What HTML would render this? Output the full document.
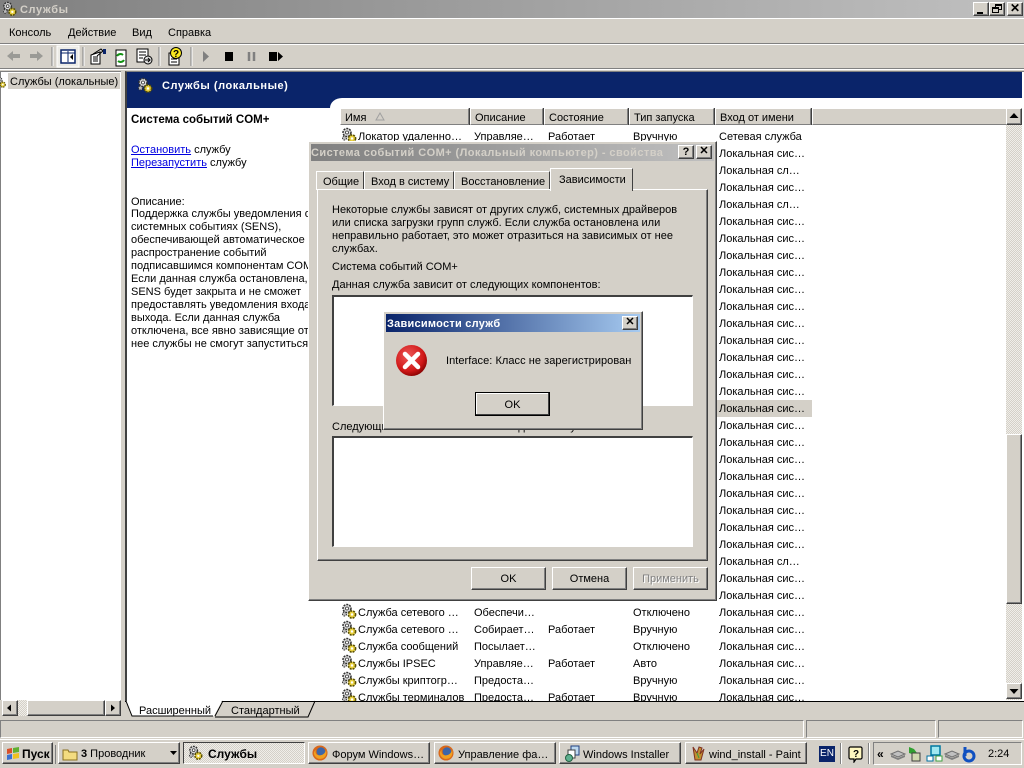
<!DOCTYPE html>
<html><head><meta charset="utf-8">
<style>
html,body{margin:0;padding:0;background:#d4d0c8}
#p{position:relative;width:1024px;height:768px;overflow:hidden;background:#d4d0c8;font:11px/13px "Liberation Sans","DejaVu Sans",sans-serif;color:#000}
#p div,#p span.a,#p svg.a{position:absolute}
.t{white-space:nowrap;transform-origin:0 50%;margin-top:1px}
.b{background:#d4d0c8;border-top:1px solid #fff;border-left:1px solid #fff;border-right:1px solid #404040;border-bottom:1px solid #404040;box-sizing:border-box;box-shadow:inset -1px -1px 0 #808080;text-align:center}
.h{background:#d4d0c8;border-top:1px solid #fff;border-left:1px solid #fff;border-right:1px solid #808080;border-bottom:1px solid #808080;box-sizing:border-box;height:17px;top:108px;padding:3px 0 0 4px;white-space:nowrap;box-shadow:1px 0 0 #404040}
.s,.d,.c,.k,.v{position:absolute;white-space:nowrap;margin-top:1px}
.s{left:18px}
.d{left:134px}
.c{left:208px}
.k{left:293px}
.v{left:379px}
.g{position:absolute;left:1px;width:17px;height:17px}
.chk{background-color:#f0eee9;background-image:linear-gradient(45deg,#d4d0c8 25%,transparent 25%,transparent 75%,#d4d0c8 75%),linear-gradient(45deg,#d4d0c8 25%,transparent 25%,transparent 75%,#d4d0c8 75%);background-size:2px 2px;background-position:0 0,1px 1px}
.sunk{border-top:1px solid #808080;border-left:1px solid #808080;border-right:1px solid #fff;border-bottom:1px solid #fff;box-sizing:border-box}
.list{background:#fff;border-top:2px solid #404040;border-left:2px solid #404040;border-right:1px solid #fff;border-bottom:1px solid #fff;box-sizing:border-box;box-shadow:1px 1px 0 #d4d0c8}
.tb{background:#d4d0c8;border-top:1px solid #fff;border-left:1px solid #fff;border-right:1px solid #404040;border-bottom:1px solid #404040;box-sizing:border-box;box-shadow:inset -1px -1px 0 #808080;height:22px;top:742px;padding:6px 0 0 24px;white-space:nowrap}
a{color:#0000e0;text-decoration:underline}
</style></head><body><div id="p">
<svg width="0" height="0" style="position:absolute"><defs>
<symbol id="gear" viewBox="0 0 17 17">
<circle cx="6" cy="5.5" r="4" fill="#d8d8d8" stroke="#303030" stroke-width="1.5" stroke-dasharray="2 1"/>
<circle cx="6" cy="5.5" r="1.5" fill="#fff" stroke="#333" stroke-width=".8"/>
<circle cx="11" cy="11.5" r="3.6" fill="#e8d040" stroke="#5a5000" stroke-width="1.6" stroke-dasharray="2 1"/>
<circle cx="11" cy="11.5" r="1.2" fill="#fff"/>
<circle cx="3.5" cy="11" r="2" fill="#bbb" stroke="#333" stroke-width="1" stroke-dasharray="1.5 1"/>
</symbol>
<symbol id="fx" viewBox="0 0 17 17">
<circle cx="8.5" cy="8.5" r="8" fill="#d9681a"/>
<circle cx="9.5" cy="7" r="4.6" fill="#3d66a8"/>
<path d="M2 9C3 14 8 16 12 14 15 12 16 9 15 5 14 9 11 11 8 11 5 11 3 9 4 5 2.500 6 2 8 2 9Z" fill="#f0a020"/>
</symbol>
</defs></svg>

<!-- title bar -->
<div style="left:0;top:0;width:1024px;height:18px;background:linear-gradient(90deg,#808080,#c0c0c0)"></div>
<svg class="a" style="left:2px;top:1px" width="16" height="16"><use href="#gear"/></svg>
<div class="t" style="left:20px;top:3px;font-weight:bold;color:#d4d0c8;letter-spacing:.6px">Службы</div>
<div class="b" style="left:973px;top:2px;width:16px;height:14px"><div style="left:3px;top:9px;width:6px;height:2px;background:#000"></div></div>
<div class="b" style="left:989px;top:2px;width:16px;height:14px"><div style="left:5px;top:1px;width:7px;height:6px;border:1px solid #000;border-top-width:2px;box-sizing:border-box"></div><div style="left:2px;top:4px;width:7px;height:6px;border:1px solid #000;border-top-width:2px;box-sizing:border-box;background:#d4d0c8"></div></div>
<div class="b" style="left:1007px;top:2px;width:16px;height:14px;font:bold 12px/11px 'Liberation Sans'">✕</div>

<div style="left:0;top:18px;width:1024px;height:1px;background:#fff"></div>
<div class="t" style="left:9px;top:26px">Консоль</div>
<div class="t" style="left:68px;top:26px">Действие</div>
<div class="t" style="left:132px;top:26px">Вид</div>
<div class="t" style="left:168px;top:26px">Справка</div>
<div style="left:0;top:43px;width:1024px;height:1px;background:#808080"></div>
<div style="left:0;top:44px;width:1024px;height:1px;background:#fff"></div>

<!-- toolbar -->
<svg class="a" style="left:0;top:45px" width="300" height="23">
<path d="M7 11l6-5v3h7v4h-7v3z" fill="#9a9a96"/><path d="M43 11l-6-5v3h-7v4h7v3z" fill="#9a9a96"/>
<path d="M52 2v19" stroke="#808080"/><path d="M53 2v19" stroke="#fff"/>
<rect x="57" y="1" width="22" height="21" fill="#ecebe6" stroke="#fff"/>
<rect x="61" y="5" width="14" height="13" fill="#fff" stroke="#0a246a" stroke-width="1.500"/><path d="M61 8h14M68 6v11" stroke="#0a246a"/><path d="M73 9l-3 3 3 3z" fill="#000"/>
<path d="M83 2v19" stroke="#808080"/><path d="M84 2v19" stroke="#fff"/>
<path d="M91 10l9-3v12H91z" fill="#fff" stroke="#000"/><path d="M93 12h5M93 14h5M93 16h5M93 9l8-5 2 2-6 5" stroke="#000" fill="none"/><rect x="103" y="4" width="3" height="5" fill="#0a246a"/>
<rect x="116" y="5" width="10" height="16" fill="#fff" stroke="#000"/><path d="M123 10a4 4 0 0 0-6 1M118 16a4 4 0 0 0 6-1" stroke="#109010" stroke-width="2" fill="none"/>
<rect x="137" y="4" width="11" height="13" fill="#fff" stroke="#000"/><path d="M139 7h7M139 10h7M139 13h4" stroke="#000"/><circle cx="148" cy="15" r="4" fill="#ddd" stroke="#000"/><path d="M145 15h5M148 13l2 2-2 2" stroke="#000" fill="none"/>
<path d="M159 2v19" stroke="#808080"/><path d="M160 2v19" stroke="#fff"/>
<rect x="169" y="8" width="10" height="12" fill="#fff" stroke="#000"/><path d="M171 11h6M171 14h6M171 17h6" stroke="#000"/>
<circle cx="176" cy="8" r="5.500" fill="#f8e820" stroke="#000"/><text x="173" y="12" font-family="Liberation Sans" font-size="10" font-weight="bold">?</text>
<path d="M191 2v19" stroke="#808080"/><path d="M192 2v19" stroke="#fff"/>
<path d="M203 6l6 5.500-6 5.500z" fill="#808080"/>
<rect x="225" y="7" width="8" height="9" fill="#000"/>
<path d="M249 7v9M254 7v9" stroke="#808080" stroke-width="2.500"/>
<rect x="269" y="7" width="8" height="9" fill="#000"/><path d="M278 7l5 4.500-5 4.500z" fill="#000"/>
</svg>
<div style="left:0;top:68px;width:1024px;height:1px;background:#808080"></div>
<div style="left:0;top:69px;width:1024px;height:1px;background:#fff"></div>

<!-- tree pane -->
<div style="left:0;top:71px;width:121px;height:629px;background:#fff;border-top:1px solid #808080;border-left:1px solid #808080;box-sizing:border-box"></div>
<svg class="a" style="left:-5px;top:75px" width="12" height="15"><use href="#gear"/></svg>
<div style="left:8px;top:73px;width:112px;height:16px;background:#d4d0c8"></div>
<div class="t" style="left:10px;top:75px">Службы (локальные)</div>
<div class="chk" style="left:2px;top:700px;width:119px;height:16px"></div>
<div class="b" style="left:2px;top:700px;width:16px;height:16px"></div>
<svg class="a" style="left:2px;top:700px" width="16" height="16"><path d="M9 4.500l-4 3.500 4 3.500z"/></svg>
<div class="b" style="left:27px;top:700px;width:78px;height:16px"></div>
<div class="b" style="left:105px;top:700px;width:16px;height:16px"></div>
<svg class="a" style="left:105px;top:700px" width="16" height="16"><path d="M6 4.500l4 3.500-4 3.500z"/></svg>

<!-- main pane -->
<div style="left:125px;top:71px;width:899px;height:630px;background:#fff;border-left:2px solid #404040;border-top:1px solid #808080;box-sizing:border-box"></div>
<div style="left:127px;top:72px;width:895px;height:26px;background:#0a246a"></div>
<svg class="a" style="left:137px;top:77px" width="17" height="17"><use href="#gear"/></svg>
<div class="t" style="left:162px;top:79px;font-weight:bold;color:#fff;letter-spacing:.55px">Службы (локальные)</div>
<div style="left:127px;top:98px;width:203px;height:11px;background:#0a246a"></div>
<div style="left:127px;top:108px;width:213px;height:593px;background:#fff"></div>
<svg class="a" style="left:320px;top:98px" width="22" height="12"><rect width="22" height="12" fill="#fff"/><path d="M0 0h22a12 10 0 0 0-12 10H0z" fill="#0a246a"/></svg>

<div class="t" style="left:131px;top:113px;font-weight:bold;font-size:11.5px">Система событий COM+</div>
<div class="t" style="left:131px;top:143px"><a>Остановить</a> службу</div>
<div class="t" style="left:131px;top:156px"><a>Перезапустить</a> службу</div>
<div class="t" style="left:131px;top:195px">Описание:</div>
<div style="left:131px;top:208px;width:178px;height:150px;overflow:hidden;white-space:nowrap">Поддержка службы уведомления о<br>системных событиях (SENS),<br>обеспечивающей автоматическое<br>распространение событий<br>подписавшимся компонентам COM.<br>Если данная служба остановлена,<br>SENS будет закрыта и не сможет<br>предоставлять уведомления входа и<br>выхода. Если данная служба<br>отключена, все явно зависящие от<br>нее службы не смогут запуститься.</div>

<!-- list header -->
<div class="h" style="left:340px;width:129px">Имя</div>
<svg class="a" style="left:375px;top:112px" width="10" height="9"><path d="M5 1l4 7H1z" fill="none" stroke="#a0a0a0"/></svg>
<div class="h" style="left:470px;width:73px">Описание</div>
<div class="h" style="left:544px;width:84px">Состояние</div>
<div class="h" style="left:629px;width:85px">Тип запуска</div>
<div class="h" style="left:715px;width:96px">Вход от имени</div>
<div class="h" style="left:812px;width:194px;box-shadow:none;border-right:0"></div>

<!-- list -->
<div style="left:340px;top:127px;width:666px;height:574px;overflow:hidden;background:#fff">
<div style="left:377px;top:273px;width:95px;height:17px;background:#d4d0c8"></div>
<svg class="g" style="top:0"><use href="#gear"/></svg>
<span class="s" style="top:3px">Локатор удаленно…</span><span class="d" style="top:3px">Управляе…</span><span class="c" style="top:3px">Работает</span><span class="k" style="top:3px">Вручную</span><span class="v" style="top:3px">Сетевая служба</span>
<span class="v" style="top:20px">Локальная сис…</span>
<span class="v" style="top:37px">Локальная сл…</span>
<span class="v" style="top:54px">Локальная сис…</span>
<span class="v" style="top:71px">Локальная сл…</span>
<span class="v" style="top:88px">Локальная сис…</span>
<span class="v" style="top:105px">Локальная сис…</span>
<span class="v" style="top:122px">Локальная сис…</span>
<span class="v" style="top:139px">Локальная сис…</span>
<span class="v" style="top:156px">Локальная сис…</span>
<span class="v" style="top:173px">Локальная сис…</span>
<span class="v" style="top:190px">Локальная сис…</span>
<span class="v" style="top:207px">Локальная сис…</span>
<span class="v" style="top:224px">Локальная сис…</span>
<span class="v" style="top:241px">Локальная сис…</span>
<span class="v" style="top:258px">Локальная сис…</span>
<span class="v" style="top:275px">Локальная сис…</span>
<span class="v" style="top:292px">Локальная сис…</span>
<span class="v" style="top:309px">Локальная сис…</span>
<span class="v" style="top:326px">Локальная сис…</span>
<span class="v" style="top:343px">Локальная сис…</span>
<span class="v" style="top:360px">Локальная сис…</span>
<span class="v" style="top:377px">Локальная сис…</span>
<span class="v" style="top:394px">Локальная сис…</span>
<span class="v" style="top:411px">Локальная сис…</span>
<span class="v" style="top:428px">Локальная сл…</span>
<span class="v" style="top:445px">Локальная сис…</span>
<span class="v" style="top:462px">Локальная сис…</span>
<svg class="g" style="top:476px"><use href="#gear"/></svg>
<span class="s" style="top:479px">Служба сетевого …</span><span class="d" style="top:479px">Обеспечи…</span><span class="k" style="top:479px">Отключено</span><span class="v" style="top:479px">Локальная сис…</span>
<svg class="g" style="top:493px"><use href="#gear"/></svg>
<span class="s" style="top:496px">Служба сетевого …</span><span class="d" style="top:496px">Собирает…</span><span class="c" style="top:496px">Работает</span><span class="k" style="top:496px">Вручную</span><span class="v" style="top:496px">Локальная сис…</span>
<svg class="g" style="top:510px"><use href="#gear"/></svg>
<span class="s" style="top:513px">Служба сообщений</span><span class="d" style="top:513px">Посылает…</span><span class="k" style="top:513px">Отключено</span><span class="v" style="top:513px">Локальная сис…</span>
<svg class="g" style="top:527px"><use href="#gear"/></svg>
<span class="s" style="top:530px">Службы IPSEC</span><span class="d" style="top:530px">Управляе…</span><span class="c" style="top:530px">Работает</span><span class="k" style="top:530px">Авто</span><span class="v" style="top:530px">Локальная сис…</span>
<svg class="g" style="top:544px"><use href="#gear"/></svg>
<span class="s" style="top:547px">Службы криптогр…</span><span class="d" style="top:547px">Предоста…</span><span class="k" style="top:547px">Вручную</span><span class="v" style="top:547px">Локальная сис…</span>
<svg class="g" style="top:561px"><use href="#gear"/></svg>
<span class="s" style="top:564px">Службы терминалов</span><span class="d" style="top:564px">Предоста…</span><span class="c" style="top:564px">Работает</span><span class="k" style="top:564px">Вручную</span><span class="v" style="top:564px">Локальная сис…</span>
</div>

<!-- v scrollbar -->
<div class="chk" style="left:1006px;top:108px;width:16px;height:592px"></div>
<div class="b" style="left:1006px;top:108px;width:16px;height:17px"></div>
<svg class="a" style="left:1006px;top:108px" width="16" height="17"><path d="M8 5l4.500 5H3.500z"/></svg>
<div class="b" style="left:1006px;top:434px;width:16px;height:170px"></div>
<div class="b" style="left:1006px;top:683px;width:16px;height:16px"></div>
<svg class="a" style="left:1006px;top:683px" width="16" height="16"><path d="M3.500 6h9L8 11z"/></svg>

<!-- bottom -->
<div style="left:125px;top:701px;width:899px;height:1px;background:#000"></div>
<svg class="a" style="left:125px;top:700px" width="195" height="19">
<path d="M1 1l6 15h82l8-15" fill="#fff" stroke="none"/>
<path d="M1 1l6 15h81M90 16l8-15" fill="none" stroke="#000"/>
<path d="M91 16L98 2H191L184 17H91" fill="#d4d0c8"/>
<path d="M90 17h93l7-16" fill="none" stroke="#000"/>
</svg>
<div class="t" style="left:139px;top:704px">Расширенный</div>
<div class="t" style="left:231px;top:704px">Стандартный</div>

<!-- status bar -->
<div style="left:0;top:720px;width:804px;height:18px" class="sunk"></div>
<div style="left:806px;top:720px;width:130px;height:18px" class="sunk"></div>
<div style="left:938px;top:720px;width:85px;height:18px" class="sunk"></div>
<div style="left:0;top:739px;width:1024px;height:1px;background:#fff"></div>

<!-- taskbar -->
<div class="b" style="left:2px;top:742px;width:51px;height:22px"></div>
<svg class="a" style="left:6px;top:746px" width="15" height="15"><path d="M1 3l5-1v5l-5 1z" fill="#d8502a"/><path d="M7 2l6-1v5l-6 1z" fill="#60b030"/><path d="M1 9l5-1v5l-5 1z" fill="#3a70d0"/><path d="M7 8l6-1v5l-6 1z" fill="#f0c020"/></svg>
<div class="t" style="left:22px;top:747px;font-weight:bold;font-size:12px">Пуск</div>
<div style="left:55px;top:745px;width:1px;height:19px;background:#808080"></div>
<div class="tb" style="left:58px;width:122px"></div>
<svg class="a" style="left:62px;top:746px" width="17" height="16"><path d="M1 4h5l1 2h8v8H1z" fill="#f3dc80" stroke="#8a7020"/></svg>
<div class="t" style="left:81px;top:747px"><b>3</b> Проводник</div>
<svg class="a" style="left:170px;top:751px" width="8" height="5"><path d="M0 0h7L3.500 4z"/></svg>
<div class="chk" style="left:183px;top:742px;width:122px;height:22px;border-top:1px solid #404040;border-left:1px solid #404040;border-right:1px solid #fff;border-bottom:1px solid #fff;box-sizing:border-box"></div>
<svg class="a" style="left:188px;top:745px" width="16" height="16"><use href="#gear"/></svg>
<div class="t" style="left:208px;top:747px;font-weight:bold;font-size:12px">Службы</div>
<div class="tb" style="left:308px;width:122px;padding-left:23px">Форум Windows…</div>
<svg class="a" style="left:312px;top:745px" width="16" height="16"><use href="#fx"/></svg>
<div class="tb" style="left:434px;width:122px;padding-left:23px">Управление фа…</div>
<svg class="a" style="left:438px;top:745px" width="16" height="16"><use href="#fx"/></svg>
<div class="tb" style="left:559px;width:122px;padding-left:23px">Windows Installer</div>
<svg class="a" style="left:564px;top:745px" width="17" height="17"><rect x="7" y="1" width="8" height="9" fill="#bcd8f0" stroke="#204080"/><rect x="4" y="5" width="7" height="8" fill="#fff" stroke="#404040"/><circle cx="5" cy="13" r="3.500" fill="#60b090" stroke="#206040"/></svg>
<div class="tb" style="left:685px;width:122px;padding-left:23px">wind_install - Paint</div>
<svg class="a" style="left:690px;top:745px" width="16" height="17"><path d="M3 2l4 6 2-6 3 1-2 6 4-5-3 11H5z" fill="#c09030" stroke="#803020"/><path d="M7 8l2 5" stroke="#30a040"/></svg>
<div style="left:819px;top:746px;width:16px;height:16px;background:#0a246a;color:#fff;font-size:10px;line-height:16px;text-align:center">EN</div>
<div style="left:840px;top:743px;width:1px;height:21px;background:#808080"></div>
<div style="left:841px;top:743px;width:1px;height:21px;background:#fff"></div>
<svg class="a" style="left:848px;top:746px" width="16" height="17"><path d="M2 1h11l1 1v10l-1 1H8l-2 3v-3H2l-1-1V2z" fill="#fff8c0" stroke="#000" stroke-width="1.200"/><text x="5" y="11" font-family="Liberation Sans" font-size="10" font-weight="bold">?</text></svg>
<div style="left:868px;top:743px;width:1px;height:21px;background:#808080"></div>
<div style="left:869px;top:743px;width:1px;height:21px;background:#fff"></div>
<div class="sunk" style="left:873px;top:742px;width:149px;height:23px"></div>
<div class="t" style="left:877px;top:747px;font-weight:bold;font-size:12px">«</div>
<svg class="a" style="left:890px;top:745px" width="90" height="18">
<path d="M1 9l7-3 7 3-7 3z" fill="#c0c0c0" stroke="#707070"/><path d="M1 10l7 3 7-3v2l-7 3-7-3z" fill="#808080"/>
<path d="M19 2l5 2 3 4-2 2-6-2z" fill="#30a030"/><rect x="22" y="8" width="8" height="8" fill="#d0d8b0" stroke="#404040"/>
<rect x="41" y="1" width="9" height="9" fill="#a0e8f0" stroke="#0078a0" stroke-width="1.500"/><rect x="37" y="11" width="6" height="5" fill="#fff" stroke="#0070a0"/><rect x="46" y="11" width="6" height="5" fill="#fff" stroke="#40a040"/>
<path d="M55 9l7-3 7 3-7 3z" fill="#c0c0c0" stroke="#707070"/><path d="M55 10l7 3 7-3v2l-7 3-7-3z" fill="#808080"/>
<ellipse cx="79" cy="11" rx="5" ry="5" fill="none" stroke="#1050c0" stroke-width="3"/><path d="M75 2v9" stroke="#1050c0" stroke-width="3"/>
</svg>
<div class="t" style="left:988px;top:747px">2:24</div>

<!-- properties dialog -->
<div class="b" style="left:308px;top:141px;width:409px;height:460px;box-shadow:inset -1px -1px 0 #808080,inset 1px 1px 0 #d4d0c8"></div>
<div style="left:311px;top:144px;width:403px;height:17px;background:linear-gradient(90deg,#808080,#c0c0c0)"></div>
<div class="t" style="left:311px;top:146px;font-weight:bold;color:#d4d0c8;letter-spacing:.43px">Система событий COM+ (Локальный компьютер) - свойства</div>
<div class="b" style="left:678px;top:145px;width:16px;height:14px;font:bold 11px/12px 'Liberation Sans'">?</div>
<div class="b" style="left:696px;top:145px;width:16px;height:14px;font:bold 11px/11px 'Liberation Sans'">✕</div>
<!-- tabs -->
<div style="left:316px;top:171px;width:48px;height:19px;background:#d4d0c8;border-top:1px solid #fff;border-left:1px solid #fff;border-right:1px solid #404040;box-sizing:border-box;padding:4px 0 0 6px">Общие</div>
<div style="left:364px;top:171px;width:90px;height:19px;background:#d4d0c8;border-top:1px solid #fff;border-left:1px solid #fff;border-right:1px solid #404040;box-sizing:border-box;padding:4px 0 0 6px;white-space:nowrap">Вход в систему</div>
<div style="left:454px;top:171px;width:96px;height:19px;background:#d4d0c8;border-top:1px solid #fff;border-left:1px solid #fff;border-right:1px solid #404040;box-sizing:border-box;padding:4px 0 0 6px;white-space:nowrap">Восстановление</div>
<div style="left:317px;top:189px;width:391px;height:372px;background:#d4d0c8;border-top:1px solid #fff;border-left:1px solid #fff;border-right:1px solid #404040;border-bottom:1px solid #404040;box-sizing:border-box;box-shadow:inset -1px -1px 0 #808080"></div>
<div style="left:550px;top:168px;width:83px;height:23px;background:#d4d0c8;border-top:1px solid #fff;border-left:1px solid #fff;border-right:1px solid #404040;box-sizing:border-box;padding:5px 0 0 8px;white-space:nowrap">Зависимости</div>
<div style="left:332px;top:204px;width:370px;white-space:nowrap">Некоторые службы зависят от других служб, системных драйверов<br>или списка загрузки групп служб. Если служба остановлена или<br>неправильно работает, это может отразиться на зависимых от нее<br>службах.</div>
<div class="t" style="left:332px;top:260px">Система событий COM+</div>
<div class="t" style="left:332px;top:278px">Данная служба зависит от следующих компонентов:</div>
<div class="list" style="left:332px;top:295px;width:361px;height:111px"></div>
<div class="t" style="left:332px;top:420px">Следующие компоненты зависят от данной службы:</div>
<div class="list" style="left:332px;top:436px;width:361px;height:111px"></div>
<div class="b" style="left:471px;top:567px;width:75px;height:23px;line-height:23px">OK</div>
<div class="b" style="left:552px;top:567px;width:75px;height:23px;line-height:23px">Отмена</div>
<div class="b" style="left:633px;top:567px;width:75px;height:23px;line-height:23px;color:#808080;text-shadow:1px 1px 0 #fff">Применить</div>

<!-- error dialog -->
<div class="b" style="left:383px;top:311px;width:260px;height:119px;box-shadow:inset -1px -1px 0 #808080"></div>
<div style="left:386px;top:314px;width:254px;height:18px;background:linear-gradient(90deg,#0a246a,#a6caf0)"></div>
<div class="t" style="left:387px;top:317px;font-weight:bold;color:#fff;letter-spacing:.25px">Зависимости служб</div>
<div class="b" style="left:622px;top:316px;width:16px;height:14px;font:bold 11px/11px 'Liberation Sans'">✕</div>
<svg class="a" style="left:395px;top:344px" width="33" height="33"><defs><radialGradient id="er" cx=".4" cy=".35" r=".7"><stop offset="0" stop-color="#ee5a5a"/><stop offset=".7" stop-color="#d01818"/><stop offset="1" stop-color="#800000"/></radialGradient></defs><circle cx="16.500" cy="16.500" r="15.500" fill="url(#er)"/><path d="M10 10l13 13M23 10L10 23" stroke="#fff" stroke-width="4.500" stroke-linecap="round"/></svg>
<div class="t" style="left:446px;top:354px;letter-spacing:.05px">Interface: Класс не зарегистрирован</div>
<div class="b" style="left:475px;top:392px;width:75px;height:24px;line-height:24px;border:1px solid #000;box-shadow:inset -1px -1px 0 #404040,inset 1px 1px 0 #fff">OK</div>
</div></body></html>
